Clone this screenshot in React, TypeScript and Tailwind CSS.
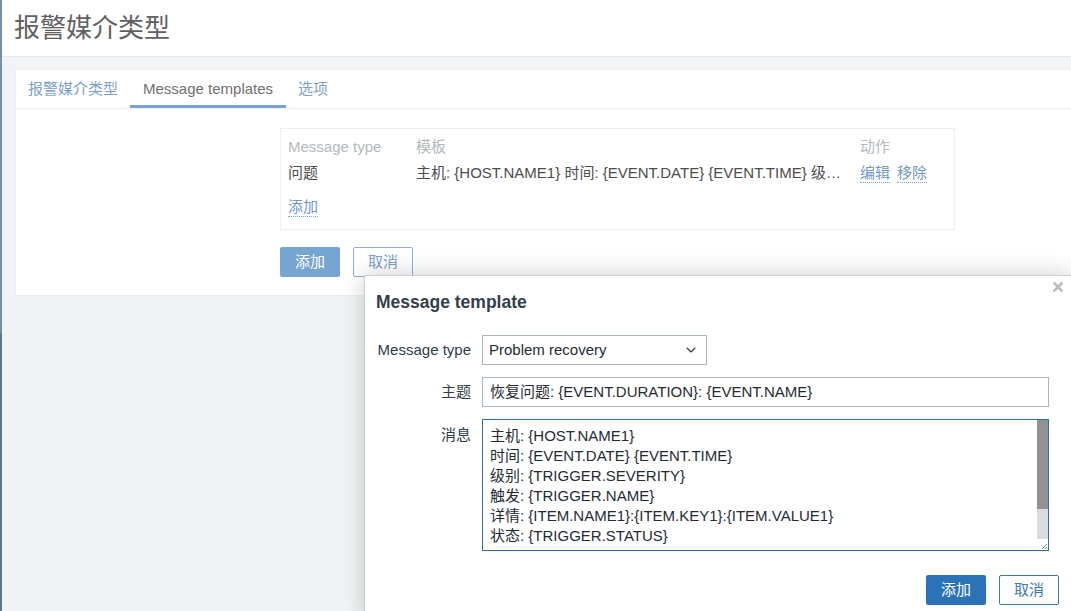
import React from "react";
import { ChevronDown } from "lucide-react";

const font = "font-['Liberation_Sans','Noto_Sans_CJK_SC',sans-serif]";

function DotLink({ children }: { children: React.ReactNode }) {
  return (
    <div className="text-[#7199c8] border-b border-dotted border-[#7fa4cf] leading-[18px] whitespace-nowrap">{children}</div>
  );
}

export default function App() {
  const lines = [
    "主机: {HOST.NAME1}",
    "时间: {EVENT.DATE} {EVENT.TIME}",
    "级别: {TRIGGER.SEVERITY}",
    "触发: {TRIGGER.NAME}",
    "详情: {ITEM.NAME1}:{ITEM.KEY1}:{ITEM.VALUE1}",
    "状态: {TRIGGER.STATUS}",
  ];
  return (
    <div className={`${font} relative w-[1071px] h-[611px] overflow-hidden flex bg-[#f1f3f4] text-[15px]`}>
      {/* left strip */}
      <div className="w-[2px] flex flex-col shrink-0">
        <div className="h-[333px] bg-[#7590aa]" />
        <div className="flex-1 bg-[#61778a]" />
      </div>

      <div className="flex-1 flex flex-col">
        {/* header */}
        <div className="h-[57px] bg-white border-b border-[#e5e8ea] flex items-center pl-[12px] shrink-0">
          <h1 className="text-[26px] text-[#616161] leading-none -mt-[1px]">报警媒介类型</h1>
        </div>

        <div className="pt-[12px] pl-[13px]">
          <div className="bg-white border border-r-0 border-[#eceef0] h-[227px] flex flex-col">
            {/* tabs */}
            <div className="h-[39px] border-b border-[#eef0f2] flex items-stretch pl-[12px] shrink-0">
              <div className="pr-[12px] flex items-center pt-[1px] text-[#7b9fca]">报警媒介类型</div>
              <div className="px-[13px] flex items-center text-[#707070] border-b-[3px] border-[#79a2ce] pt-[4px]">
                Message templates
              </div>
              <div className="px-[12px] flex items-center pt-[1px] text-[#7b9fca]">选项</div>
            </div>

            <div className="pl-[264px] pt-[19px]">
              {/* table box */}
              <div className="w-[675px] h-[102px] border border-[#eceef0] px-[7px] pt-[6px] flex flex-col">
                <div className="flex h-[24px] items-center text-[#b3b8bc]">
                  <div className="w-[128px] shrink-0">Message type</div>
                  <div className="w-[444px] shrink-0">模板</div>
                  <div>动作</div>
                </div>
                <div className="flex h-[28px] items-center text-[#4d4d4d]">
                  <div className="w-[128px] shrink-0">问题</div>
                  <div className="w-[444px] shrink-0 whitespace-nowrap">
                    主机: {"{HOST.NAME1}"} 时间: {"{EVENT.DATE}"} {"{EVENT.TIME}"} 级…
                  </div>
                  <div className="flex gap-[7px] shrink-0 pt-[1px]">
                    <DotLink>编辑</DotLink>
                    <DotLink>移除</DotLink>
                  </div>
                </div>
                <div className="flex h-[24px] items-center mt-[8px]">
                  <DotLink>添加</DotLink>
                </div>
              </div>

              {/* buttons */}
              <div className="flex gap-[13px] mt-[17px]">
                <div className="w-[60px] h-[30px] rounded-[2px] bg-[#77a5d2] text-white flex items-center justify-center">添加</div>
                <div className="w-[60px] h-[30px] rounded-[2px] border border-[#8eb0d6] text-[#7b9fc8] bg-white flex items-center justify-center">取消</div>
              </div>
            </div>
          </div>
        </div>
      </div>

      {/* dialog */}
      <div className="absolute left-[364px] top-[275px] w-[709px] h-[345px] bg-white border border-[#c9d0d5] shadow-[0_0_22px_rgba(0,0,0,0.2)] text-[#2f3d47]">
        <div className="relative px-[11px] pt-[16px]">
          <div className="text-[17.5px] font-bold leading-[20px] text-[#33404a]">Message template</div>
          <svg className="absolute right-[9px] top-[6px]" width="10" height="10" viewBox="0 0 10 10">
            <path d="M1.5 1.5 L8.5 8.5 M8.5 1.5 L1.5 8.5" stroke="#b9bec3" strokeWidth="2.6" strokeLinecap="square" />
          </svg>
        </div>

        <div className="pl-[11px] mt-[23px] flex flex-col">
          {/* message type */}
          <div className="flex items-center">
            <div className="w-[95px] text-right whitespace-nowrap">Message type</div>
            <div className="ml-[11px] w-[225px] h-[30px] border border-[#a9b6be] flex items-center justify-between pl-[6px] pr-[7px] text-[#1f2c33]">
              <span>Problem recovery</span>
              <ChevronDown size={16} strokeWidth={1.6} className="text-[#333]" />
            </div>
          </div>
          {/* subject */}
          <div className="flex items-center mt-[12px]">
            <div className="w-[95px] text-right">主题</div>
            <div className="ml-[11px] w-[567px] h-[30px] border border-[#a9b6be] flex items-center pl-[7px] text-[#1f2c33]">
              恢复问题: {"{EVENT.DURATION}"}: {"{EVENT.NAME}"}
            </div>
          </div>
          {/* message */}
          <div className="flex items-start mt-[12px]">
            <div className="w-[95px] text-right pt-[5px]">消息</div>
            <div className="ml-[11px] w-[567px] h-[132px] border border-[#2d6da9] flex">
              <div className="flex-1 pl-[7px] pt-[6px] leading-[20px] text-[#1f2c33] overflow-hidden">
                {lines.map((l) => (
                  <div key={l} className="whitespace-nowrap">{l}</div>
                ))}
              </div>
              <div className="w-[11px] flex flex-col">
                <div className="h-[89px] bg-[#929292]" />
                <div className="flex-1 bg-[#d6dce0]" />
                <div className="h-[11px] bg-white flex items-end justify-end">
                  <svg width="8" height="8" viewBox="0 0 8 8">
                    <path d="M7 2 L2 7 M7 5 L5 7" stroke="#888" strokeWidth="1" />
                  </svg>
                </div>
              </div>
            </div>
          </div>
          {/* buttons */}
          <div className="flex gap-[13px] mt-[24px] pl-[550px]">
            <div className="w-[60px] h-[30px] rounded-[2px] bg-[#2b73b7] text-white flex items-center justify-center">添加</div>
            <div className="w-[60px] h-[30px] rounded-[2px] border border-[#3d78b3] text-[#3d78b3] flex items-center justify-center">取消</div>
          </div>
        </div>
      </div>
    </div>
  );
}
